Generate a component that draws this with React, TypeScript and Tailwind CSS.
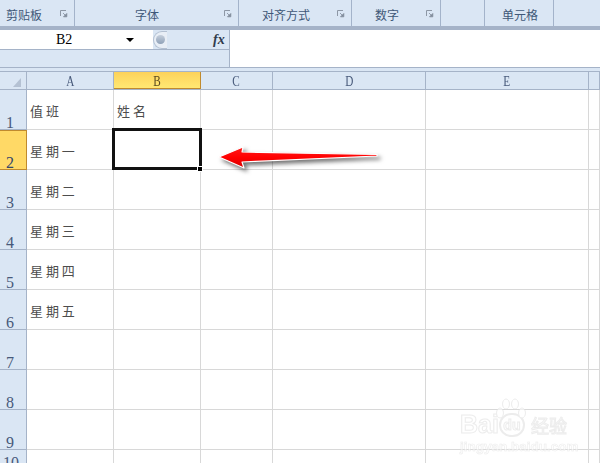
const groups = [
  { label: '剪贴板', width: 'w-[75px]', pad: 'pl-[6px]', launcher: true },
  { label: '字体', width: 'w-[164px]', pad: 'pl-[60px]', launcher: true },
  { label: '对齐方式', width: 'w-[113px]', pad: 'pl-[23px]', launcher: true },
  { label: '数字', width: 'w-[89px]', pad: 'pl-[23px]', launcher: true },
  { label: '', width: 'w-[44px]', pad: '', launcher: false },
  { label: '单元格', width: 'w-[69px]', pad: 'pl-[17px]', launcher: false },
];

const columns = [
  { name: 'A', width: 'w-[87px]' },
  { name: 'B', width: 'w-[87px]' },
  { name: 'C', width: 'w-[72px]' },
  { name: 'D', width: 'w-[153px]' },
  { name: 'E', width: 'w-[163px]' },
  { name: '', width: 'flex-1' },
];

const rows = [
  ['值 班', '姓 名'],
  ['星 期 一', ''],
  ['星 期 二', ''],
  ['星 期 三', ''],
  ['星 期 四', ''],
  ['星 期 五', ''],
  ['', ''],
  ['', ''],
  ['', ''],
  ['', ''],
];

function Launcher() {
  return (
    <svg width="8" height="8" viewBox="0 0 8 8" className="ml-auto mr-[6px] mt-[2px] shrink-0">
      <path d="M0.5 6V0.5H6" fill="none" stroke="#8d97a5" />
      <path d="M3 3l3 3M6.8 3.5v3.3H3.5z" fill="#7f8a99" stroke="#7f8a99" strokeWidth="0.8" />
    </svg>
  );
}

function Ribbon() {
  return (
    <div className="flex h-[30px] border-b-[4px] border-b-[#a5b3c8] bg-[#dae6f4]">
      {groups.map((g, i) => (
        <div key={i} className={`flex h-full items-center border-r border-r-[#a3b3ca] ${g.width} ${g.pad}`}>
          {g.label && <span className="pt-[3px] text-[12px] leading-none text-[#3f5878]">{g.label}</span>}
          {g.launcher && <Launcher />}
        </div>
      ))}
      <div className="flex-1" />
    </div>
  );
}

function FormulaBar() {
  return (
    <div className="flex h-[38px] border-b border-b-[#a5b3c8]">
      <div className="flex w-[230px] flex-col border-r border-r-[#a5b3c8] bg-[#dae6f4]">
        <div className="flex h-[20px] items-center border-b border-b-[#a5b3c8]">
          <div className="flex h-full w-[153px] items-center bg-white">
            <span className="ml-[56px] text-[14px] leading-none text-black [font-family:'Liberation_Serif',serif]">B2</span>
            <span className="ml-[54px] h-0 w-0 border-x-[4px] border-t-[4px] border-x-transparent border-t-black" />
          </div>
          <div className="flex h-[18px] w-[14px] items-center justify-center rounded-l-full border border-r-0 border-[#b3c0d2] bg-[#e8eef6]">
            <span className="h-[9px] w-[9px] rounded-full bg-gradient-to-b from-[#c5cfdc] to-[#8fa1b8]" />
          </div>
          <span className="ml-[46px] text-[14px] font-bold italic leading-none text-[#2f3b4c] [font-family:'Liberation_Serif',serif]">fx</span>
        </div>
      </div>
      <div className="flex-1 bg-white" />
    </div>
  );
}

function Arrow() {
  return (
    <svg width="175" height="40" viewBox="0 0 175 40" className="absolute left-[212px] top-[139px] drop-shadow-[3px_3px_2px_rgba(0,0,0,0.55)]">
      <defs>
        <linearGradient id="arrowFill" x1="0" y1="0" x2="0" y2="1">
          <stop offset="0" stopColor="#ff1a1a" />
          <stop offset="0.5" stopColor="#ff0000" />
          <stop offset="1" stopColor="#d80000" />
        </linearGradient>
      </defs>
      <path d="M7 18L31 8L30 13L165 15.5L165 17L30 23L32 29Z" fill="url(#arrowFill)" stroke="#fff" strokeWidth="1.2" strokeLinejoin="round" />
    </svg>
  );
}

function Watermark() {
  return (
    <div className="absolute left-[460px] top-[398px] h-[54px] w-[108px] opacity-60 [font-family:'Liberation_Sans',sans-serif]">
      <svg width="32" height="24" viewBox="0 0 32 24" className="absolute left-[35px] top-0">
        <g fill="#fff" stroke="#e0e0e0" strokeWidth="1">
          <ellipse cx="5" cy="15" rx="3.5" ry="5" />
          <ellipse cx="11" cy="6" rx="3.5" ry="5" />
          <ellipse cx="20" cy="6" rx="3.5" ry="5" />
          <ellipse cx="27" cy="15" rx="3.5" ry="5" />
        </g>
      </svg>
      <div className="flex items-center pt-[14px] text-white [-webkit-text-stroke:1px_#e0e0e0]">
        <span className="text-[25px] font-bold leading-none">Bai</span>
        <span className="flex h-[24px] w-[26px] items-center justify-center rounded-full border-2 border-[#e0e0e0] text-[14px] font-bold leading-none">du</span>
        <span className="ml-[6px] text-[18px] leading-none [font-family:'Noto_Sans_CJK_SC',sans-serif]">经验</span>
      </div>
      <div className="mt-[3px] whitespace-nowrap text-[13.5px] font-bold leading-none text-white [-webkit-text-stroke:0.6px_#e0e0e0]">jingyan.baidu.com</div>
    </div>
  );
}

function Sheet() {
  return (
    <div className="mt-[3px] flex flex-col [font-family:'Liberation_Serif','Noto_Sans_CJK_SC',serif]">
      <div className="flex h-[19px] border-y border-y-[#a5b3c8]">
        <div className="relative w-[27px] shrink-0 border-r border-r-[#a5b3c8] bg-[#dae6f4]">
          <span className="absolute bottom-[2px] right-[5px] h-0 w-0 border-b-[9px] border-l-[8px] border-b-[#b4c1d3] border-l-transparent" />
        </div>
        {columns.map((c, i) => (
          <div
            key={i}
            className={`flex items-center justify-center pt-[2px] text-[15px] leading-none ${c.width} ${
              i === 1
                ? 'border-r border-b border-r-[#c08a2e] border-b-[#c08a2e] bg-gradient-to-b from-[#fdd25a] to-[#ffe873] text-[#5a4a20]'
                : 'border-r border-r-[#a5b3c8] bg-[#dae6f4] text-[#47597a]'
            }`}
          >
            <span className="scale-x-75">{c.name}</span>
          </div>
        ))}
      </div>
      {rows.map((row, r) => (
        <div key={r} className={`flex shrink-0 ${r === 9 ? 'h-[20px]' : 'h-[40px]'}`}>
          <div
            className={`flex w-[27px] shrink-0 items-end justify-center text-[16px] leading-[13px] ${
              r === 1
                ? 'border-y border-r border-[#c08a2e] bg-[#ffd966] text-[#33476a]'
                : 'border-r border-b border-[#a5b3c8] bg-[#dae6f4] text-[#47597a]'
            } ${r === 9 ? 'pr-[4px]' : 'pr-[6px]'}`}
          >
            {r + 1}
          </div>
          {columns.map((c, i) => (
            <div
              key={i}
              className={`flex items-center border-r border-b border-[#d8d8d8] bg-white pl-[3px] pt-[2px] text-[13px] leading-none text-[#4d4d4d] [font-family:'Noto_Sans_CJK_SC',sans-serif] ${c.width}`}
            >
              {row[i] ?? ''}
            </div>
          ))}
        </div>
      ))}
    </div>
  );
}

export default function App() {
  return (
    <div className="relative h-[463px] w-[600px] overflow-hidden bg-[#dae6f4] [font-family:'Noto_Sans_CJK_SC',sans-serif]">
      <Ribbon />
      <FormulaBar />
      <Sheet />
      {/* selection box and fill handle */}
      <div className="absolute left-[112px] top-[128px] h-[42px] w-[90px] border-[3px] border-[#111]" />
      <div className="absolute left-[197px] top-[166px] h-[6px] w-[6px] border border-white bg-black" />
      <Arrow />
      <Watermark />
    </div>
  );
}
